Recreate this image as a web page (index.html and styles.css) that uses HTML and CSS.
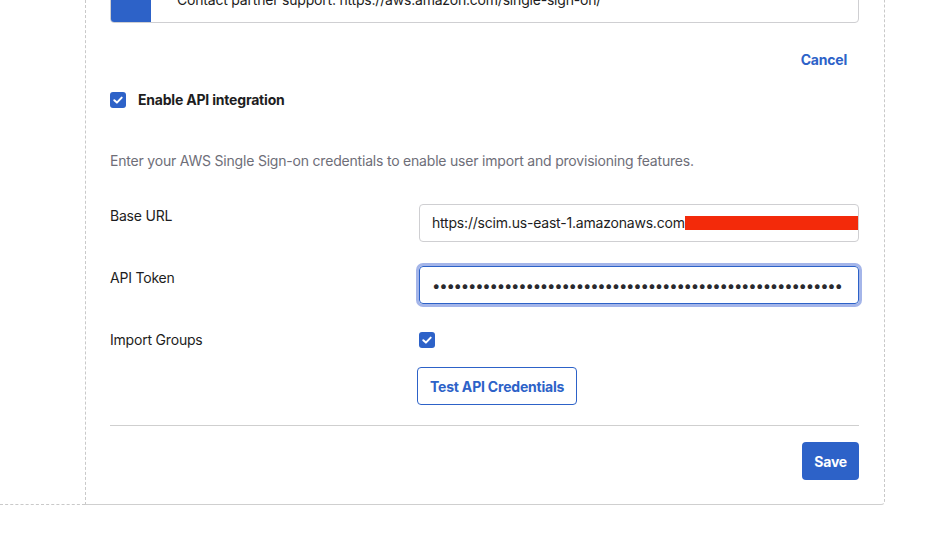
FILE: index.html
```html
<!DOCTYPE html>
<html>
<head>
<meta charset="utf-8">
<link rel="stylesheet" href="styles.css">
</head>
<body>
<div class="page">
  <div class="gutter"></div>
  <div class="card">
    <div class="notice">
      <div class="notice-stripe"></div>
      <div class="notice-text">Contact partner support: https://aws.amazon.com/single-sign-on/</div>
    </div>
    <div class="cancel-row"><a class="link-btn">Cancel</a></div>
    <div class="enable-row">
      <span class="checkbox"><svg viewBox="0 0 16 16" width="16" height="16"><path d="M4.3 8.2 L6.9 10.6 L11.7 5.6" fill="none" stroke="#fff" stroke-width="2" stroke-linecap="round" stroke-linejoin="round"/></svg></span>
      <span class="enable-label">Enable API integration</span>
    </div>
    <p class="desc">Enter your AWS Single Sign-on credentials to enable user import and provisioning features.</p>
    <div class="form-row first">
      <div class="label">Base URL</div>
      <div class="field"><span class="field-text">https://scim.us-east-1.amazonaws.com</span><span class="redact"></span></div>
    </div>
    <div class="form-row">
      <div class="label">API Token</div>
      <div class="field focused"><span class="dots">•••••••••••••••••••••••••••••••••••••••••••••••••••••••••</span></div>
    </div>
    <div class="form-row check-row">
      <div class="label">Import Groups</div>
      <div class="control"><span class="checkbox"><svg viewBox="0 0 16 16" width="16" height="16"><path d="M4.3 8.2 L6.9 10.6 L11.7 5.6" fill="none" stroke="#fff" stroke-width="2" stroke-linecap="round" stroke-linejoin="round"/></svg></span></div>
    </div>
    <div class="form-row btn-row">
      <div class="label"></div>
      <div class="control"><button class="btn-outline">Test API Credentials</button></div>
    </div>
    <div class="footer">
      <button class="btn-primary">Save</button>
    </div>
  </div>
</div>
</body>
</html>
```
FILE: styles.css
```css
html, body {
  margin: 0;
  padding: 0;
  background: #fff;
}
body {
  font-family: Inter, "Noto Sans", sans-serif;
  font-size: 14px;
  letter-spacing: -0.2px;
  color: #1d1d21;
}
.page {
  display: flex;
  align-items: flex-end;
}
.gutter {
  width: 85px;
  flex: none;
  border-bottom: 1px dashed #c9c9c9;
}
.card {
  width: 749px;
  flex: none;
  border-left: 1px dashed #c9c9c9;
  border-right: 1px dashed #c9c9c9;
  border-bottom: 1px solid #cfcfcf;
  border-bottom-right-radius: 4px;
  padding: 0 25px 24px 24px;
}
.notice {
  margin-top: -25px;
  height: 46px;
  border: 1px solid #cfcfd2;
  border-radius: 4px;
  display: flex;
  overflow: hidden;
}
.notice-stripe {
  width: 40px;
  background: #2d62c8;
  flex: none;
}
.notice-text {
  padding-left: 26px;
  display: flex;
  align-items: center;
  color: #1d1d21;
}
.cancel-row {
  display: flex;
  justify-content: flex-end;
  padding-top: 27px;
  padding-right: 12px;
  height: 20px;
}
.link-btn {
  color: #2d62c8;
  font-weight: 700;
  line-height: 20px;
}
.enable-row {
  display: flex;
  align-items: center;
  gap: 12px;
  margin-top: 21px;
  height: 18px;
}
.checkbox {
  width: 16px;
  height: 16px;
  border-radius: 3px;
  background: #2d62c8;
  display: inline-block;
  flex: none;
}
.checkbox svg {
  display: block;
}
.enable-label {
  font-weight: 700;
  line-height: 18px;
}
.desc {
  margin: 42px 0 0;
  color: #6e6e78;
  line-height: 20px;
}
.form-row {
  display: flex;
  margin-top: 24px;
}
.form-row.first {
  margin-top: 33px;
}
.label {
  width: 309px;
  flex: none;
  padding-top: 2px;
  line-height: 20px;
}
.field {
  flex: 1;
  height: 36px;
  border: 1px solid #cfcfd2;
  border-radius: 4px;
  display: flex;
  align-items: center;
  padding-left: 12px;
  overflow: hidden;
}
.field-text {
  line-height: 20px;
  white-space: nowrap;
}
.redact {
  flex: 1;
  height: 14px;
  background: #f32a0a;
  margin-right: -1px;
}
.focused {
  border-color: #2d62c8;
  box-shadow: 0 0 0 3px #a4b5e9;
}
.dots {
  font-size: 15px;
  letter-spacing: -1.25px;
  white-space: nowrap;
  color: #2a2a2e;
}
.check-row {
  margin-top: 26px;
}
.check-row .label {
  padding-top: 0;
}
.check-row .control {
  padding-top: 2px;
}
.btn-row {
  margin-top: 16px;
}
.btn-outline {
  margin-left: -2px;
  height: 38px;
  padding: 0 12px;
  border: 1px solid #2d62c8;
  border-radius: 4px;
  background: #fff;
  color: #2d62c8;
  font-family: inherit;
  font-size: 14px;
  letter-spacing: -0.2px;
  font-weight: 700;
}
.footer {
  margin-top: 20px;
  border-top: 1px solid #cfcfcf;
  padding-top: 16px;
  display: flex;
  justify-content: flex-end;
}
.btn-primary {
  height: 38px;
  padding: 0 12px;
  border: none;
  border-radius: 4px;
  background: #2d62c8;
  color: #fff;
  font-family: inherit;
  font-size: 14px;
  letter-spacing: -0.2px;
  font-weight: 700;
}
```
